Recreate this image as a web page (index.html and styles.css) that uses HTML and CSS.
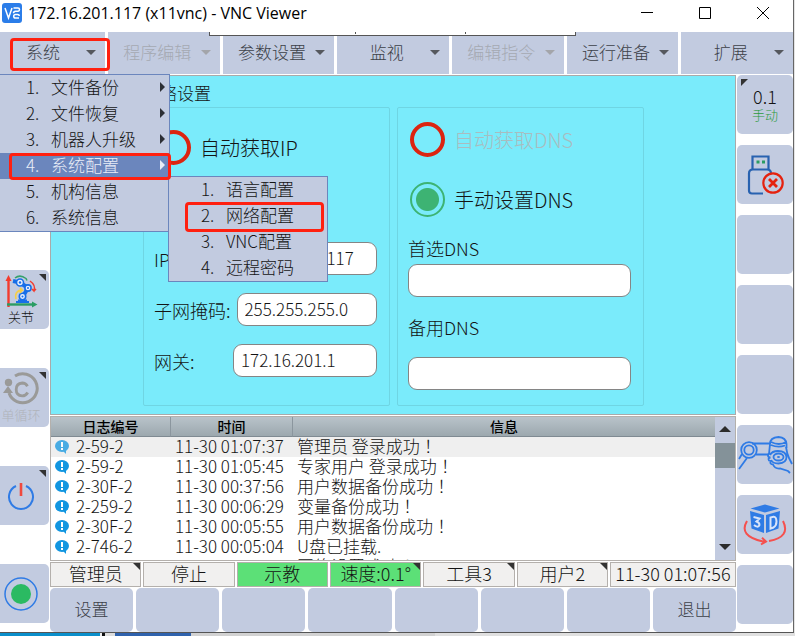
FILE: index.html
```
<!DOCTYPE html>
<html lang="zh-CN">
<head>
<meta charset="utf-8">
<title>172.16.201.117 (x11vnc) - VNC Viewer</title>
<link rel="stylesheet" href="styles.css">
</head>
<body>
<div class="window">
  <header class="titlebar">
    <svg class="logo" width="20" height="20" viewBox="0 0 20 20" aria-hidden="true">
      <rect width="20" height="20" rx="3" fill="#2b7de9"/>
      <path d="M3 5l3.500 10L10 5M11.500 5h4.500q1.500 0 1.500 1.500t-1.500 1.800h-2.500q-2 .2-2 2M17 15h-3.500q-1.800 0-1.800-1.800t1.800-1.800h2q1.800 0 1.800 1.500" fill="none" stroke="#fff" stroke-width="1.500"/>
    </svg>
    <h1 class="window-title">172.16.201.117 (x11vnc) - VNC Viewer</h1>
    <div class="window-controls">
      <button type="button" aria-label="最小化"><svg width="12" height="12" viewBox="0 0 12 12"><path d="M0 5.500h12" stroke="#000"/></svg></button>
      <button type="button" aria-label="最大化"><svg width="12" height="12" viewBox="0 0 12 12"><path d="M.5.5h11v11H.5z" fill="none" stroke="#000"/></svg></button>
      <button type="button" aria-label="关闭"><svg width="12" height="12" viewBox="0 0 12 12"><path d="M0 0l12 12M12 0L0 12" stroke="#000"/></svg></button>
    </div>
  </header>

  <div class="app">
    <div class="toolbar-tab"></div>
    <nav class="menubar">
      <button type="button" class="menu-button first"><span>系统</span></button>
      <button type="button" class="menu-button" disabled><span>程序编辑</span></button>
      <button type="button" class="menu-button"><span>参数设置</span></button>
      <button type="button" class="menu-button"><span>监视</span></button>
      <button type="button" class="menu-button" disabled><span>编辑指令</span></button>
      <button type="button" class="menu-button"><span>运行准备</span></button>
      <button type="button" class="menu-button"><span>扩展</span></button>
    </nav>

    <div class="menu main-menu">
      <button type="button" class="menu-item has-sub"><b>1.</b>文件备份</button>
      <button type="button" class="menu-item has-sub"><b>2.</b>文件恢复</button>
      <button type="button" class="menu-item has-sub"><b>3.</b>机器人升级</button>
      <button type="button" class="menu-item has-sub selected"><b>4.</b>系统配置</button>
      <button type="button" class="menu-item"><b>5.</b>机构信息</button>
      <button type="button" class="menu-item"><b>6.</b>系统信息</button>
    </div>
    <div class="menu sub-menu">
      <button type="button" class="menu-item"><b>1.</b>语言配置</button>
      <button type="button" class="menu-item"><b>2.</b>网络配置</button>
      <button type="button" class="menu-item"><b>3.</b>VNC配置</button>
      <button type="button" class="menu-item"><b>4.</b>远程密码</button>
    </div>
    <div class="mark mark-system"></div>
    <div class="mark mark-config"></div>
    <div class="mark mark-network"></div>

    <div class="workspace">
      <aside class="left-rail">
        <button type="button" class="tile corner">
          <svg width="34" height="34" viewBox="0 0 34 34" aria-hidden="true">
            <path d="M4.500 33V6" stroke="#f33b2e" stroke-width="2.400"/><path d="M1.500 7L4.500 1l3 6z" fill="#f33b2e"/>
            <path d="M3 30.500h26" stroke="#2a9d63" stroke-width="2.400"/><path d="M28 27.500l5.500 3-5.500 3z" fill="#2a9d63"/>
            <path d="M12 28h13M14 26.500h9" stroke="#176fe8" stroke-width="2"/>
            <path d="M18.500 23L24 14M24 14L16 8.500M16 8.500L9 7" stroke="#176fe8" stroke-width="4"/>
            <g fill="#e8f0ff" stroke="#176fe8" stroke-width="1.600"><circle cx="18.500" cy="22.500" r="3.200"/><circle cx="24" cy="14" r="3.100"/><circle cx="16" cy="8.500" r="3.500"/></g>
            <g fill="#176fe8"><circle cx="18.500" cy="22.500" r="1"/><circle cx="24" cy="14" r="1"/><circle cx="16" cy="8.500" r="1.200"/></g>
            <path d="M11 4q5-4 11 .5l1 2" fill="none" stroke="#34a06c" stroke-width="1.500"/>
            <path d="M26 7q6 4 4 10l-2-2m2 2l2-2" fill="none" stroke="#f33b2e" stroke-width="1.500"/>
            <path d="M12 25q-2-8 6-9l-2-2m2 2l-2 3" fill="none" stroke="#f4cf4a" stroke-width="1.800"/>
          </svg>
          <span class="tile-label">关节</span>
        </button>
        <button type="button" class="tile corner" disabled>
          <svg width="36" height="34" viewBox="0 0 36 34" aria-hidden="true">
            <path d="M12 4a14.500 14.500 0 1 1-6 17" fill="none" stroke="#9a9a98" stroke-width="3"/>
            <path d="M0 21l5-7 5 7z" fill="#9a9a98"/><circle cx="5.500" cy="10.500" r="3.700" fill="#9a9a98"/>
            <path d="M24.500 14.200q-1.800-3.200-5.300-3.200-6 .4-6 6.500 0 6 6 6.400 3.700 0 5.500-3.400" fill="none" stroke="#9a9a98" stroke-width="2.800"/>
          </svg>
          <span class="tile-label">单循环</span>
        </button>
        <button type="button" class="tile corner" aria-label="电源">
          <svg width="28" height="30" viewBox="0 0 28 30" aria-hidden="true">
            <path d="M9 5a12 12 0 1 0 10 0" fill="none" stroke="#2f7be5" stroke-width="2"/>
            <path d="M14 2v13" stroke="#f0493e" stroke-width="2.600"/>
          </svg>
        </button>
        <button type="button" class="tile" aria-label="运行">
          <svg width="34" height="34" viewBox="0 0 34 34" aria-hidden="true"><circle cx="17" cy="17" r="16" fill="none" stroke="#2f7be5" stroke-width="1.500"/><circle cx="17" cy="17" r="10" fill="#2bba62"/></svg>
        </button>
      </aside>

      <main class="center">
        <section class="panel">
          <h2 class="panel-title">网络设置</h2>
          <div class="groups">
            <fieldset class="group group-ip">
              <label class="radio"><input type="radio" name="ip">自动获取IP</label>
              <div class="rows">
                <div class="row"><label for="ip">IP地址:</label><input class="field" id="ip" type="text" value="172.16.201.117"></div>
                <div class="row"><label for="mask">子网掩码:</label><input class="field" id="mask" type="text" value="255.255.255.0"></div>
                <div class="row"><label for="gateway">网关:</label><input class="field" id="gateway" type="text" value="172.16.201.1"></div>
              </div>
            </fieldset>
            <fieldset class="group group-dns">
              <label class="radio off"><input type="radio" name="dns" disabled>自动获取DNS</label>
              <label class="radio"><input type="radio" name="dns" checked>手动设置DNS</label>
              <label class="dns-label" for="dns1">首选DNS</label>
              <input class="field" id="dns1" type="text">
              <label class="dns-label second" for="dns2">备用DNS</label>
              <input class="field" id="dns2" type="text">
            </fieldset>
          </div>
        </section>

        <section class="log">
          <div class="log-view">
            <table>
              <colgroup><col class="col-id"><col class="col-time"><col></colgroup>
              <thead><tr><th>日志编号</th><th>时间</th><th>信息</th></tr></thead>
              <tbody>
                <tr class="current"><td><i class="info"></i>2-59-2</td><td>11-30 01:07:37</td><td>管理员 登录成功<span class="bang" lang="ja">！</span></td></tr>
                <tr><td><i class="info"></i>2-59-2</td><td>11-30 01:05:45</td><td>专家用户 登录成功<span class="bang" lang="ja">！</span></td></tr>
                <tr><td><i class="info"></i>2-30F-2</td><td>11-30 00:37:56</td><td>用户数据备份成功<span class="bang" lang="ja">！</span></td></tr>
                <tr><td><i class="info"></i>2-259-2</td><td>11-30 00:06:29</td><td>变量备份成功<span class="bang" lang="ja">！</span></td></tr>
                <tr><td><i class="info"></i>2-30F-2</td><td>11-30 00:05:55</td><td>用户数据备份成功<span class="bang" lang="ja">！</span></td></tr>
                <tr><td><i class="info"></i>2-746-2</td><td>11-30 00:05:04</td><td>U盘已挂载.</td></tr>
                <tr><td><i class="info"></i>2-1030-E1</td><td>11-30 00:04:48</td><td>网络设置成功<span class="bang" lang="ja">！</span></td></tr>
              </tbody>
            </table>
          </div>
          <div class="scrollbar"><i class="arrow up"></i><i class="thumb"></i><i class="arrow down"></i></div>
        </section>

        <div class="status">
          <button type="button" class="cell corner">管理员</button>
          <span class="cell">停止</span>
          <span class="cell green">示教</span>
          <button type="button" class="cell green corner">速度:0.1°</button>
          <button type="button" class="cell corner">工具3</button>
          <button type="button" class="cell corner">用户2</button>
          <span class="cell">11-30 01:07:56</span>
        </div>

        <div class="actions">
          <button type="button">设置</button>
          <button type="button" aria-label="空"></button>
          <button type="button" aria-label="空"></button>
          <button type="button" aria-label="空"></button>
          <button type="button" aria-label="空"></button>
          <button type="button" aria-label="空"></button>
          <button type="button" aria-label="空"></button>
          <button type="button">退出</button>
        </div>
      </main>

      <aside class="right-rail">
        <button type="button" class="tile corner-left"><span class="speed">0.1</span><span class="mode">手动</span></button>
        <button type="button" class="tile" aria-label="USB">
          <svg width="38" height="40" viewBox="0 0 38 40" aria-hidden="true">
            <path d="M6.500 14V1.500h16V14" fill="none" stroke="#2862b0" stroke-width="2.200"/>
            <path d="M17 38.500H6q-3 0-3-3V18.500q0-4 4-4h14q4 0 4 4V20" fill="none" stroke="#2862b0" stroke-width="2.200"/>
            <path d="M10.500 7h3M16 7h3" stroke="#2a9d63" stroke-width="3"/>
            <circle cx="27" cy="28" r="9.700" fill="#c2cbe0" stroke="#e5210e" stroke-width="2.200"/>
            <path d="M23 24l8 8M31 24l-8 8" stroke="#e5210e" stroke-width="2.800"/>
          </svg>
        </button>
        <button type="button" class="tile" aria-label="空"></button>
        <button type="button" class="tile" aria-label="空"></button>
        <button type="button" class="tile" aria-label="空"></button>
        <button type="button" class="tile" aria-label="手动引导">
          <svg width="55" height="38" viewBox="0 0 55 38" aria-hidden="true">
            <g fill="none" stroke="#2f7be5" stroke-width="1.800">
              <circle cx="11" cy="14" r="7.800"/><circle cx="11" cy="14" r="4.700"/>
              <path d="M14 7.500h18M18 18.500h13M4 18l-3 5M9 22L1 33"/>
              <path d="M32 8q0-6.500 8.500-7Q48 1.500 48.500 8v4M32 8l-1 10M33 6q8 4 15 0M33 9q7 3 14 .5"/>
              <path d="M33 18q-3-1-3 1.500 0 2 2.500 2-3 .5-1.500 3l2 .5q-2 3 2 3.500 2 4.500 7 4l8 2.500 2 2"/>
              <path d="M32 19q2-4 8-4 8 0 8.500 6 0 6-8 6.500-6 0-7.500-3.500M48 11q1 7 3 11l3 6"/>
              <ellipse cx="40.500" cy="21" rx="5" ry="3.500"/>
            </g>
            <ellipse cx="40.500" cy="21" rx="1.500" ry="1" fill="#2f7be5"/>
          </svg>
        </button>
        <button type="button" class="tile" aria-label="三维视图">
          <svg width="46" height="42" viewBox="0 0 46 42" aria-hidden="true">
            <path d="M8.500 4.500L23 .5l14.500 4L23 8.500zM8 7l14 4v18L9.500 24.500zM38 7l-14 4v18l12.500-4.500z" fill="#2f7be5"/>
            <path d="M11.500 13l6 1.500-3 3q3.500 1.500 2.800 4-1.800 2.500-5.300-.5M28.500 13.500v11l3-1q3-2 3-6-.3-5-3-4.700z" fill="none" stroke="#d8e4fa" stroke-width="2"/>
            <path d="M5 17q-9 15 16 20.500l3-.2m-4-3.500l4 3.700-5 3M41 17q8 16-14 20" fill="none" stroke="#f5504e" stroke-width="2"/>
          </svg>
        </button>
        <button type="button" class="tile" aria-label="空"></button>
      </aside>
    </div>
  </div>
</div>
<footer class="behind"></footer>
</body>
</html>
```

FILE: styles.css
```
* {
  box-sizing: border-box;
}

:root {
  --tile: #c2cbe0;
  --line: #b4b0ac;
  --accent: #6b86bd;
  --cyan: #7aebfb;
  --mark: #ff2010;
}

body {
  margin: 0;
  min-height: 100vh;
  display: flex;
  flex-direction: column;
  background: #e4e4e4;
  color: #141414;
  font-family: "Noto Sans CJK SC", sans-serif;
  font-size: 17px;
  font-weight: 300;
  line-height: 20px;
}

button,
input {
  font: inherit;
  color: inherit;
}

button {
  margin: 0;
  padding: 0;
  border: 0;
  background: none;
}

.window {
  flex: 1;
  display: flex;
  flex-direction: column;
  margin-right: 1px;
  border-right: 1px solid #666;
  border-bottom: 1px solid #555;
  background: #fff;
}

/* Title bar */
.titlebar {
  display: flex;
  align-items: center;
  height: 32px;
  padding: 0 24px 6px 2px;
  color: #000;
}

.window-title {
  flex: 1;
  margin: 0 0 0 6px;
  font: 400 16px/20px "Open Sans", sans-serif;
}

.window-controls {
  display: flex;
  gap: 46px;
}

.window-controls button {
  display: flex;
}

/* Menu bar */
.app {
  position: relative;
  flex: 1;
  display: flex;
  flex-direction: column;
}

.toolbar-tab {
  position: absolute;
  top: 0;
  left: 209px;
  width: 367px;
  height: 4px;
  border: solid #555;
  border-width: 0 1px 1px;
  background:
    linear-gradient(#555, #555) 145px 0 / 1px 2px no-repeat,
    linear-gradient(#555, #555) 255px 0 / 1px 2px no-repeat,
    #fff;
}

.menubar {
  display: grid;
  grid-template-columns: 105px repeat(6, 1fr);
  gap: 3px;
  height: 42px;
  margin-bottom: 1px;
}

.menu-button {
  display: flex;
  align-items: center;
  padding: 0 9px 2px 0;
  background: var(--tile);
  color: #3c4148;
}

.menu-button span {
  flex: 1;
  padding-left: 6px;
  text-align: center;
}

.menu-button.first span {
  padding-left: 0;
}

.menu-button::after {
  content: "";
  border: solid transparent;
  border-width: 5px 5px 0;
  border-top-color: #55585e;
}

.menu-button:disabled {
  color: #a5a9b2;
}

.menu-button:disabled::after {
  border-top-color: #a3a5aa;
}

/* Drop-down menus */
.menu {
  position: absolute;
  z-index: 1;
  display: flex;
  flex-direction: column;
  border: 1px solid var(--accent);
  background: var(--tile);
}

.main-menu {
  top: 42px;
  left: 0;
  width: 170px;
  border-left: 0;
}

.sub-menu {
  top: 144px;
  left: 168px;
  width: 160px;
  padding-left: 6px;
}

.menu-item {
  display: flex;
  align-items: center;
  height: 26px;
  padding: 0 4px 2px 26px;
}

.menu-item b {
  width: 25px;
  font-weight: inherit;
  text-align: left;
}

.has-sub::after {
  content: "";
  margin-left: auto;
  border: solid transparent;
  border-width: 5px 0 5px 5px;
  border-left-color: #2c2f35;
}

.selected {
  background: var(--accent);
  color: #e8ecf6;
}

.selected::after {
  border-left-color: #e8ecf6;
}

/* Red call-out frames */
.mark {
  position: absolute;
  z-index: 2;
  border: 3px solid var(--mark);
  border-radius: 4px;
  pointer-events: none;
}

.mark-system {
  top: 6px;
  left: 10px;
  width: 100px;
  height: 33px;
}

.mark-config {
  top: 121px;
  left: 9px;
  width: 162px;
  height: 27px;
}

.mark-network {
  top: 170px;
  left: 185px;
  width: 139px;
  height: 30px;
}

/* Work area */
.workspace {
  flex: 1;
  display: grid;
  grid-template-columns: 49px 1fr 56px;
  column-gap: 1px;
}

.left-rail,
.right-rail {
  display: flex;
  flex-direction: column;
}

.left-rail {
  gap: 39px;
  padding-top: 195px;
}

.right-rail {
  gap: 11px;
}

.tile {
  position: relative;
  display: flex;
  flex-direction: column;
  align-items: center;
  justify-content: center;
  height: 59px;
  border-radius: 5px;
  background: var(--tile);
}

.left-rail .tile {
  padding-right: 7px;
  border-radius: 0 5px 5px 0;
}

.tile-label {
  font-size: 13px;
  line-height: 18px;
}

.tile:disabled .tile-label {
  color: #b0b3ba;
}

.corner {
  position: relative;
}

.corner::after,
.corner-left::after {
  content: "";
  position: absolute;
  top: 4px;
  right: 3px;
  border: solid transparent;
  border-width: 0 7px 7px 0;
  border-right-color: #333;
}

.corner-left::after {
  right: auto;
  left: 4px;
  border-width: 7px 7px 0 0;
  border-right-color: transparent;
  border-top-color: #333;
}

.cell.corner::after {
  top: 0;
  right: 0;
}

.speed {
  font-size: 18px;
  line-height: 20px;
}

.mode {
  color: #2c9a3e;
  font-size: 13px;
  line-height: 18px;
}

.center {
  display: flex;
  flex-direction: column;
  min-width: 0;
}

/* Network settings */
.panel {
  flex: 1;
  padding: 7px 91px 0 92px;
  border: 1px solid #aaa;
  background: var(--cyan);
}

.panel-title {
  margin: 0 0 4px;
  font-size: 17px;
  font-weight: 300;
  line-height: 20px;
}

.groups {
  display: grid;
  grid-template-columns: 1fr 1fr;
  gap: 7px;
}

.group {
  display: flex;
  flex-direction: column;
  min-width: 0;
  height: 299px;
  margin: 0;
  padding: 14px 12px 0 10px;
  border: 1px solid #6fd5e3;
  border-radius: 2px;
  font-size: 18px;
}

.group-ip {
  padding-top: 22px;
}

.radio {
  display: flex;
  align-items: center;
  gap: 9px;
  margin: 0 0 25px 2px;
  font-size: 20px;
  line-height: 35px;
}

.radio.off {
  color: #a9bcc0;
}

.radio input {
  appearance: none;
  width: 35px;
  height: 35px;
  margin: 0;
  border: 4px solid #dc2410;
  border-radius: 50%;
}

.radio input:checked {
  border: 2px solid #3db373;
  background: radial-gradient(circle, #3db373 11px, transparent 12px);
}

.rows {
  display: grid;
  grid-template-columns: minmax(0, 1fr);
  gap: 18px;
  margin-top: 52px;
}

.row {
  display: flex;
  align-items: center;
  gap: 6px;
}

.row label {
  min-width: 73px;
}

.field {
  flex: 1;
  min-width: 0;
  height: 33px;
  padding: 0 7px 2px;
  border: 1px solid #858585;
  border-radius: 9px;
  background: #fff;
  font-size: 17px;
}

.group-dns .field {
  flex: none;
}

.dns-label {
  margin: -4px 0 6px;
}

.dns-label.second {
  margin: 20px 0;
}

/* Log */
.log {
  display: flex;
  height: 145px;
  margin-top: 1px;
  border: 1px solid var(--line);
  background: #fff;
}

.log-view {
  flex: 1;
  overflow: hidden;
}

.log table {
  width: 100%;
  table-layout: fixed;
  border-spacing: 0;
}

.col-id {
  width: 120px;
}

.col-time {
  width: 122px;
}

.log th {
  height: 20px;
  padding: 0;
  border-bottom: 1px solid #7f8a92;
  border-right: 1px solid #8b969e;
  background: linear-gradient(#b9c3ca, #9ca8ae);
  color: #000;
  font-size: 14px;
  font-weight: 500;
  line-height: 19px;
}

.log th:last-child {
  border-right: 0;
}

.log td {
  height: 20px;
  padding: 0 4px 2px;
  white-space: nowrap;
  line-height: 18px;
}

.log td:first-child {
  padding-left: 25px;
  position: relative;
}

.bang {
  font-family: "Noto Sans CJK JP", sans-serif;
}

.current {
  background: #efefef;
}

.info {
  position: absolute;
  top: 3px;
  left: 4px;
  width: 14px;
  height: 12px;
  border-radius: 50%;
  background: linear-gradient(#fff, #fff) 6px 2px / 2px 5px no-repeat, linear-gradient(#fff, #fff) 6px 8px / 2px 2px no-repeat, #1296e0;
}

.info::after {
  content: "";
  position: absolute;
  top: 10px;
  left: 7px;
  border: solid transparent;
  border-width: 0 4px 4px 0;
  border-right-color: #1296e0;
}

.current .info {
  opacity: 0.75;
}

.scrollbar {
  display: flex;
  flex-direction: column;
  align-items: center;
  width: 20px;
  padding: 9px 0 10px;
  background: var(--tile);
}

.arrow {
  border: solid transparent;
  border-width: 0 6px 6px;
  border-bottom-color: #2c2c2c;
}

.arrow.down {
  margin-top: auto;
  border-width: 6px 6px 0;
  border-top-color: #2c2c2c;
}

.thumb {
  width: 20px;
  height: 25px;
  margin-top: 11px;
  background: #849299;
}

/* Status and actions */
.status {
  display: grid;
  grid-template-columns: repeat(6, 1fr) 126px;
  gap: 2px;
  height: 25px;
  margin: 1px 0;
}

.cell {
  padding-bottom: 3px;
  border: 1px solid var(--line);
  background: #f1f0ef;
  font-size: 18px;
  line-height: 20px;
  text-align: center;
}

.green {
  background: #5ce077;
}

.actions {
  display: grid;
  grid-template-columns: repeat(8, 1fr);
  gap: 3px;
  height: 44px;
}

.actions button {
  padding-bottom: 2px;
  border-radius: 5px;
  background: var(--tile);
  color: #3c4148;
}

/* Desktop visible under the window */
.behind {
  height: 3px;
  background: linear-gradient(90deg, #0a8fcb 100px, #eee 100px 102px, #111 102px 105px, #ddd 105px 115px, #2f62ad 115px 191px, #d2d2d2 191px 435px, #e0e0e0 435px);
}
```
